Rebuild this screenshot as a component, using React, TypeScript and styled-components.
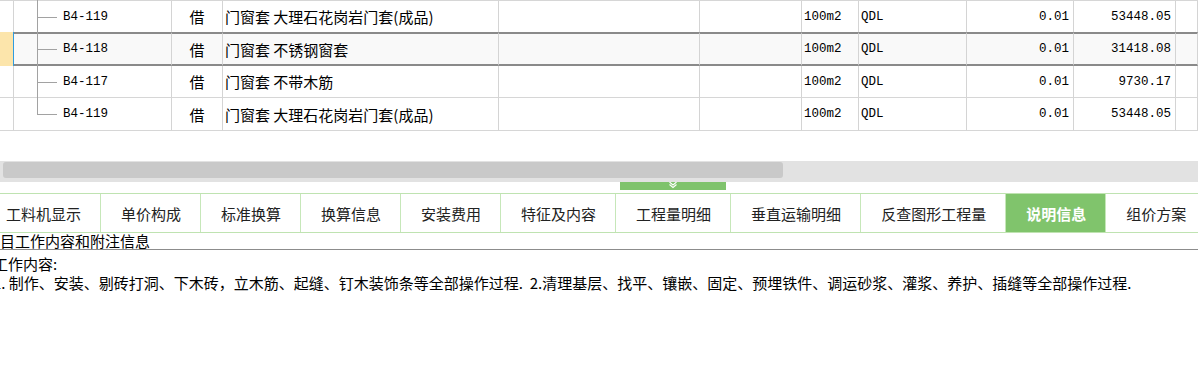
import React from "react";
import styled, { createGlobalStyle } from "styled-components";

const GlobalStyle = createGlobalStyle`
  html, body {
    margin: 0;
    padding: 0;
    background: #fff;
  }
  body {
    font-family: "Noto Sans CJK SC", "Noto Sans", sans-serif;
    overflow: hidden;
  }
  * {
    box-sizing: border-box;
  }
`;

const COLS = "14px 158px 51px 276px 201px 102px 57px 108px 107px 102px 1fr";

type Item = {
  code: string;
  kind: string;
  name: string;
  unit: string;
  src: string;
  qty: string;
  price: string;
};

const rows: Item[] = [
  { code: "B4-119", kind: "借", name: "门窗套 大理石花岗岩门套(成品)", unit: "100m2", src: "QDL", qty: "0.01", price: "53448.05" },
  { code: "B4-118", kind: "借", name: "门窗套 不锈钢窗套", unit: "100m2", src: "QDL", qty: "0.01", price: "31418.08" },
  { code: "B4-117", kind: "借", name: "门窗套 不带木筋", unit: "100m2", src: "QDL", qty: "0.01", price: "9730.17" },
  { code: "B4-119", kind: "借", name: "门窗套 大理石花岗岩门套(成品)", unit: "100m2", src: "QDL", qty: "0.01", price: "53448.05" },
];

const tabs = [
  "工料机显示",
  "单价构成",
  "标准换算",
  "换算信息",
  "安装费用",
  "特征及内容",
  "工程量明细",
  "垂直运输明细",
  "反查图形工程量",
  "说明信息",
  "组价方案",
];

const App = () => {
  const selected = 1;
  return (
    <>
      <GlobalStyle />
      <Page>
        <GridArea>
          {rows.map((r, i) => {
            const sel = i === selected;
            const last = i === rows.length - 1;
            return (
              <Row key={i} $selected={sel} $last={last}>
                <RowHead $sel={sel} />
                <Cell $sel={sel} $tree>
                  <Connector $last={last} $sel={sel} />
                  <Code>{r.code}</Code>
                </Cell>
                <Cell $sel={sel} $align="center" $cjk>
                  {r.kind}
                </Cell>
                <Cell $sel={sel} $cjk>
                  {r.name}
                </Cell>
                <Cell $sel={sel} />
                <Cell $sel={sel} />
                <Cell $sel={sel}>{r.unit}</Cell>
                <Cell $sel={sel}>{r.src}</Cell>
                <Cell $sel={sel} $align="right">
                  {r.qty}
                </Cell>
                <Cell $sel={sel} $align="right">
                  {r.price}
                </Cell>
                <Cell $sel={sel} />
              </Row>
            );
          })}
        </GridArea>

        <HScroll>
          <Thumb />
        </HScroll>

        <Splitter>
          <Handle>
            <svg width="12" height="7" viewBox="0 0 12 7">
              <polyline
                points="2.5,0 6,3 9.5,0"
                fill="none"
                stroke="#fff"
                strokeWidth="1.1"
              />
              <polyline
                points="2.5,2.5 6,5.5 9.5,2.5"
                fill="none"
                stroke="#fff"
                strokeWidth="1.1"
              />
            </svg>
          </Handle>
        </Splitter>

        <TabBar>
          <TabStrip>
            {tabs.map((t) => (
              <Tab key={t} $active={t === "说明信息"}>
                {t}
              </Tab>
            ))}
          </TabStrip>
        </TabBar>

        <InfoTitle>
          <span>项目工作内容和附注信息</span>
        </InfoTitle>
        <InfoBody>
          <p>工作内容:</p>
          <p>
            1. 制作、安装、剔砖打洞、下木砖，立木筋、起缝、钉木装饰条等全部操作过程.&nbsp;
            2.清理基层、找平、镶嵌、固定、预埋铁件、调运砂浆、灌浆、养护、插缝等全部操作过程.
          </p>
        </InfoBody>
      </Page>
    </>
  );
};

const Page = styled.div`
  width: 1198px;
  height: 388px;
  overflow: hidden;
  display: flex;
  flex-direction: column;
  background: #fff;
`;

const GridArea = styled.div`
  height: 161px;
  flex-shrink: 0;
  border-top: 1px solid #d6d6d6;
`;

const Row = styled.div<{ $selected?: boolean; $last?: boolean }>`
  display: grid;
  grid-template-columns: ${COLS};
  height: ${(p) => (p.$selected ? 34 : p.$last ? 33 : 32)}px;
  margin-top: ${(p) => (p.$selected ? -1 : 0)}px;
`;

const RowHead = styled.div<{ $sel?: boolean }>`
  background: ${(p) => (p.$sel ? "#fce5ab" : "#fff")};
  border-right: 1px solid ${(p) => (p.$sel ? "#2f9ce0" : "#d4d4d4")};
  border-bottom: ${(p) => (p.$sel ? "none" : "1px solid #d6d6d6")};
`;

const Cell = styled.div<{
  $sel?: boolean;
  $align?: "left" | "center" | "right";
  $cjk?: boolean;
  $tree?: boolean;
}>`
  display: flex;
  align-items: center;
  justify-content: ${(p) =>
    p.$align === "center" ? "center" : p.$align === "right" ? "flex-end" : "flex-start"};
  padding: ${(p) => (p.$tree ? "0 0 0 23px" : p.$align === "right" ? "0 4px 0 0" : "0 2px")};
  border-right: 1px solid #d4d4d4;
  border-top: ${(p) => (p.$sel ? "2px solid #8a8a8a" : "none")};
  border-bottom: ${(p) => (p.$sel ? "2px solid #8a8a8a" : "1px solid #d6d6d6")};
  background: ${(p) => (p.$sel ? "#f9f9f9" : "#fff")};
  font-family: ${(p) =>
    p.$cjk
      ? `"Noto Sans CJK SC", sans-serif`
      : `"Liberation Mono", "Noto Sans CJK SC", monospace`};
  font-size: ${(p) => (p.$cjk ? "15px" : "12.5px")};
  color: #000;
  white-space: nowrap;
  overflow: ${(p) => (p.$tree ? "visible" : "hidden")};
`;

const Connector = styled.span<{ $last?: boolean; $sel?: boolean }>`
  position: relative;
  align-self: stretch;
  width: 20px;
  flex-shrink: 0;
  &::before {
    content: "";
    position: absolute;
    left: 0;
    top: ${(p) => (p.$sel ? -3 : -1)}px;
    width: 1px;
    height: ${(p) => (p.$last ? "calc(50% + 1px)" : "calc(100% + 4px)")};
    background: #a2a2a2;
  }
  &::after {
    content: "";
    position: absolute;
    left: 0;
    top: 50%;
    width: 20px;
    height: 1px;
    background: #a2a2a2;
  }
`;

const Code = styled.span`
  margin-left: 6px;
`;

const HScroll = styled.div`
  height: 21px;
  flex-shrink: 0;
  background: #e2e2e2;
  padding: 1px 0 0 3px;
`;

const Thumb = styled.div`
  width: 780px;
  height: 16px;
  background: #c9c9c9;
  border-radius: 3px;
`;

const Splitter = styled.div`
  height: 11px;
  flex-shrink: 0;
  padding-left: 620px;
`;

const Handle = styled.div`
  width: 106px;
  height: 8px;
  background: #7fc36c;
  display: flex;
  justify-content: center;
  align-items: flex-start;
  svg {
    display: block;
  }
`;

const TabBar = styled.div`
  height: 40px;
  flex-shrink: 0;
  border-top: 1px solid #bfe3b1;
  border-bottom: 1px solid #bfe3b1;
  overflow: hidden;
`;

const TabStrip = styled.div`
  display: flex;
  height: 100%;
  margin-left: -14px;
`;

const Tab = styled.div<{ $active?: boolean }>`
  flex-shrink: 0;
  height: 100%;
  min-width: 100px;
  padding: 0 19px 0 20px;
  display: flex;
  align-items: center;
  justify-content: center;
  border-right: 1px solid #c6e7b9;
  background: ${(p) => (p.$active ? "#80c46c" : "#fff")};
  color: ${(p) => (p.$active ? "#fff" : "#222")};
  font-weight: ${(p) => (p.$active ? 700 : 400)};
  font-size: 15px;
  white-space: nowrap;
`;

const InfoTitle = styled.div`
  height: 17px;
  flex-shrink: 0;
  border-bottom: 1px solid #8c8c8c;
  font-size: 15px;
  line-height: 16px;
  color: #000;
  white-space: nowrap;
  overflow: hidden;
  span {
    display: block;
    margin-left: -15px;
  }
`;

const InfoBody = styled.div`
  padding-top: 4px;
  margin-left: -7px;
  font-size: 15px;
  line-height: 19px;
  color: #000;
  white-space: nowrap;
  p {
    margin: 0;
  }
`;

export default App;
